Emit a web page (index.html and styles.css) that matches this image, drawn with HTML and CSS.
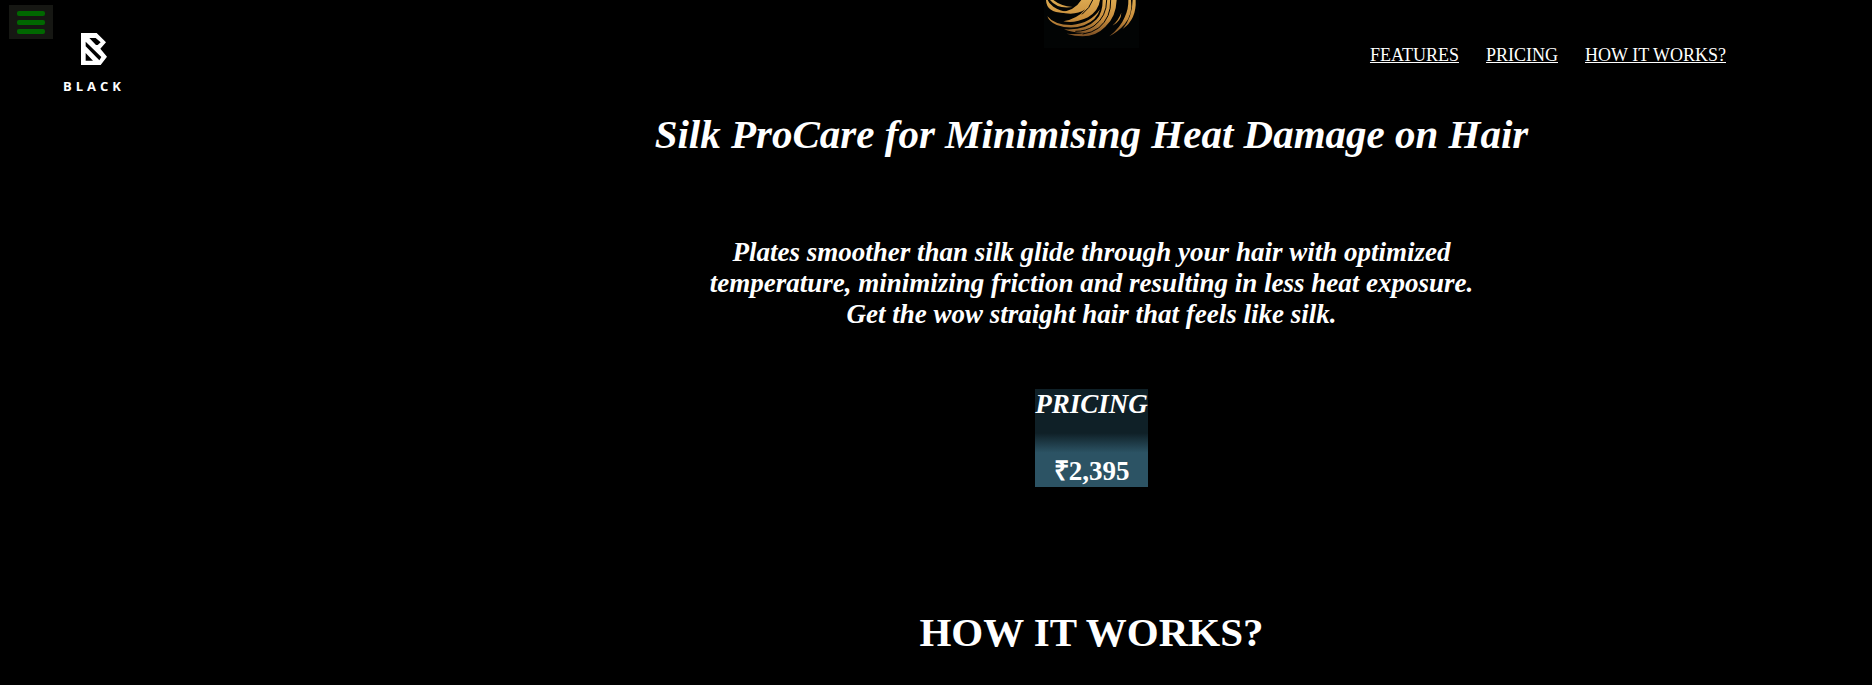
FILE: index.html
```
<!DOCTYPE html>
<html lang="en">
<head>
<meta charset="utf-8">
<title>Silk ProCare</title>
<link rel="stylesheet" href="styles.css">
</head>
<body>
<button class="menu" type="button" aria-label="Open menu"><span class="bar"></span><span class="bar"></span><span class="bar"></span></button>
<div class="page">
  <aside class="side">
    <div class="brand">
      <svg class="mark" viewBox="0 0 78 96" aria-hidden="true">
        <path fill="#fff" fill-rule="evenodd" d="M0 0H47L75 28L58 47L78 71L59 96H0ZM14 26V40L55 82L61 72ZM25 15L45 36H50L59 28L44 15ZM14 60V83H36Z"/>
      </svg>
      <span class="brand-name">BLACK</span>
    </div>
  </aside>
  <div class="content">
    <header class="top">
      <svg class="emblem" viewBox="0 0 285 144" aria-hidden="true">
        <defs><linearGradient id="gold" x1="0" y1="0" x2="0" y2="112" gradientUnits="userSpaceOnUse"><stop offset="0" stop-color="#dba84f"/><stop offset=".5" stop-color="#c98e3c"/><stop offset="1" stop-color="#764a22"/></linearGradient></defs>
        <g fill="url(#gold)">
          <path d="M6 0Q8 46 80 37Q48 34 28 20Q14 10 11 0Z"/>
          <path d="M18 0Q40 28 86 21Q50 18 28 0Z"/>
          <path d="M46 36Q90 35 112 0H168Q164 32 132 52Q90 72 58 64Q100 57 124 28Q93 49 46 36Z"/>
          <path d="M10 49Q32 76 84 75Q140 70 168 28Q158 62 120 76Q80 90 38 75Q16 66 10 49Z"/>
          <path d="M60 88Q126 92 158 58Q176 38 176 0H218Q216 52 184 80Q142 124 68 101Q104 104 124 98Q90 100 60 88Z"/>
          <path d="M196 109Q230 82 242 52Q254 26 253 0H261Q267 42 242 73Q222 96 196 109Z"/>
          <path d="M204 78Q224 60 232 38Q232 63 204 78Z"/>
          <path d="M236 87Q265 52 266 0H275Q278 58 236 87Z"/>
        </g>
        <g fill="none" stroke="#020404" stroke-width="3">
          <path d="M146 0Q138 24 114 43"/>
          <path d="M188 0Q188 50 150 78Q126 94 94 94"/>
          <path d="M200 0Q202 52 164 84Q143 99 116 102"/>
        </g>
      </svg>
      <nav class="links">
        <a href="#features">FEATURES</a>
        <a href="#pricing">PRICING</a>
        <a href="#how">HOW IT WORKS?</a>
      </nav>
    </header>
    <main class="main">
      <h1 class="title" id="features">Silk ProCare for Minimising Heat Damage on Hair</h1>
      <p class="lead">Plates smoother than silk glide through your hair with optimized<br>temperature, minimizing friction and resulting in less heat exposure.<br>Get the wow straight hair that feels like silk.</p>
      <section class="price" id="pricing">
        <h2 class="price-label">PRICING</h2>
        <p class="amount">₹2,395</p>
      </section>
      <h2 class="how" id="how">HOW IT WORKS?</h2>
    </main>
  </div>
</div>
</body>
</html>
```
FILE: styles.css
```
body {
  margin: 0;
  background: #000;
  color: #fff;
  font-family: "Liberation Serif", "Times New Roman", serif;
  font-size: 18px;
}
.menu {
  position: absolute;
  top: 5px;
  left: 9px;
  display: flex;
  flex-direction: column;
  gap: 4px;
  padding: 6px 8px 5px;
  border: 0;
  background: #161713;
  cursor: pointer;
}
.bar {
  width: 28px;
  height: 5px;
  border-radius: 2px;
  background: #006700;
}
.page {
  display: grid;
  grid-template-columns: 311px 1fr;
}
.brand {
  display: flex;
  flex-direction: column;
  align-items: center;
  width: 188px;
  padding-top: 33px;
  box-sizing: border-box;
}
.mark {
  width: 26px;
  height: 32px;
}
.brand-name {
  margin-top: 13px;
  font: bold 13px/16px "Open Sans", sans-serif;
  letter-spacing: 4px;
}
.top {
  display: grid;
  grid-template-columns: 1fr 95px 1fr;
  align-items: start;
}
.emblem {
  grid-column: 2;
  width: 95px;
  height: 48px;
  background: #020404;
}
.links {
  display: flex;
  justify-content: flex-end;
  gap: 27px;
  padding: 45px 146px 0 0;
  line-height: 20px;
  white-space: nowrap;
}
.links a {
  color: #fff;
}
.main {
  display: flex;
  flex-direction: column;
  align-items: center;
  padding: 46px 0 16px;
  text-align: center;
}
.title,
.how {
  margin: 0;
  font-size: 41px;
  line-height: 47px;
}
.title {
  font-style: italic;
}
.lead {
  margin: 79px 0 59px;
  font-size: 27px;
  font-style: italic;
  font-weight: bold;
  line-height: 31px;
}
.price {
  display: flex;
  flex-direction: column;
  gap: 36px;
  background: linear-gradient(#0f2027 45%, #2c5364 65%);
  font-size: 27px;
  font-weight: bold;
  line-height: 31px;
}
.price-label {
  margin: 0;
  font-size: 27px;
  font-style: italic;
}
.amount {
  margin: 0;
}
.how {
  margin-top: 122px;
}
```
